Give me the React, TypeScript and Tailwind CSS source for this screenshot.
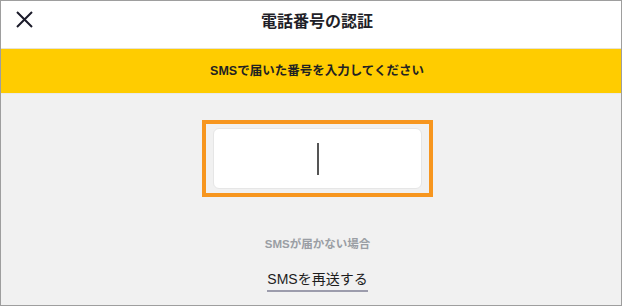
import React from 'react';

const font = { fontFamily: '"Liberation Sans", "Noto Sans CJK JP", sans-serif' };

export default function App() {
  return (
    <div
      className="w-[622px] h-[306px] flex flex-col border border-[#9e9e9e] bg-[#f1f1f1] overflow-hidden"
      style={font}
    >
      {/* Header */}
      <div className="relative h-[48px] shrink-0 bg-white border-b border-[#e6e2d6] flex items-center justify-center pl-[12px] pb-[5px]">
        <button className="absolute left-[15px] top-[10px] w-[17px] h-[17px]">
          <svg width="17" height="17" viewBox="0 0 17 17" fill="none">
            <path d="M1 1L16 16M16 1L1 16" stroke="#1b1b2a" strokeWidth="2" />
          </svg>
        </button>
        <h1 className="text-[16px] font-bold text-[#1f1f28] leading-none">電話番号の認証</h1>
      </div>

      {/* Banner */}
      <div className="h-[45px] shrink-0 bg-[#ffcc00] flex items-center justify-center pl-[12px] border-b border-[#e9e9e9]">
        <p className="text-[12.5px] font-bold text-[#222] leading-none">SMSで届いた番号を入力してください</p>
      </div>

      {/* Body */}
      <div className="flex-1 flex flex-col items-center pt-[26px] pl-[13px]">
        <div className="w-[231px] h-[77px] border-4 border-[#f7961f] px-[7px] py-[4px]">
          <div className="w-full h-full bg-white rounded-[6px] border border-[#e6e6e6] flex items-center justify-center">
            <div className="w-[2px] h-[32px] bg-[#555]" />
          </div>
        </div>

        <p className="mt-[42px] text-[11.5px] font-bold text-[#9a9ea4] leading-none">SMSが届かない場合</p>
        <button className="mt-[21px] text-[14px] text-[#1d1d1d] leading-none pb-[4px] border-b-2 border-[#9c9cac]">
          SMSを再送する
        </button>
      </div>
    </div>
  );
}
